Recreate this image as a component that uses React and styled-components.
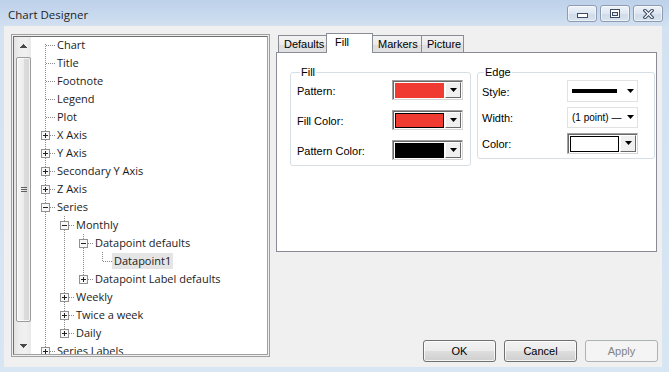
import React from "react";
import styled, { createGlobalStyle } from "styled-components";

const Global = createGlobalStyle`
  html, body { margin: 0; padding: 0; }
  body { width: 669px; height: 372px; overflow: hidden; background: #d6e3f1; }
`;

const Window = styled.div`
  width: 669px;
  height: 372px;
  display: flex;
  flex-direction: column;
  background: linear-gradient(to bottom, #bdd1ea 0px, #c9daee 16px, #d4e1f0 28px, #d8e5f3 100%);
`;

const TitleBar = styled.div`
  height: 26px;
  flex: none;
  display: flex;
  align-items: flex-start;
  padding: 0 6px 0 8px;
  box-sizing: border-box;
`;

const Title = styled.div`
  flex: 1;
  font-family: "Open Sans", sans-serif;
  font-size: 11.5px;
  color: #1e1e1e;
  line-height: 16px;
  padding-top: 7px;
`;

const Controls = styled.div`
  display: flex;
  gap: 3px;
  margin-top: 5px;
`;

const CtlBtn = styled.div`
  width: 30px;
  height: 17px;
  box-sizing: border-box;
  border: 1px solid #8d9cb2;
  border-radius: 3px;
  background: linear-gradient(to bottom, #eef3f9 0%, #dde6f1 50%, #cfdbe9 51%, #d9e3ef 100%);
  box-shadow: inset 0 0 0 1px rgba(255, 255, 255, 0.55);
  display: flex;
  align-items: center;
  justify-content: center;
`;

const Client = styled.div`
  flex: 1;
  margin: 0 7px 5px 4px;
  background: #f0f0f0;
  display: flex;
  gap: 6px;
  padding: 8px 5px 0 7px;
  box-sizing: border-box;
`;

/* ---------- tree ---------- */
const TreeFrame = styled.div`
  width: 259px;
  height: 323px;
  flex: none;
  box-sizing: border-box;
  border: 1px solid #a0a0a0;
  padding: 1px;
  background: #f0f0f0;
`;

const TreeInner = styled.div`
  height: 100%;
  box-sizing: border-box;
  border: 1px solid #6f6f6f;
  border-right-color: #a0a0a0;
  border-bottom-color: #a0a0a0;
  background: #fff;
  display: flex;
  overflow: hidden;
`;

const ScrollBar = styled.div`
  width: 17px;
  flex: none;
  display: flex;
  flex-direction: column;
  background: linear-gradient(to right, #e4e4e4, #eeeeee 35%, #f1f1f1 70%, #e9e9e9);
`;

const ScrollBtn = styled.div`
  height: 17px;
  flex: none;
  display: flex;
  align-items: center;
  justify-content: center;
  padding-left: 2px;
`;

const Track = styled.div`
  flex: 1;
  display: flex;
  flex-direction: column;
  padding: 3px 0 15px 2px;
`;

const Thumb = styled.div`
  flex: 1;
  border: 1px solid #9b9b9b;
  border-radius: 2px;
  background: linear-gradient(to right, #f6f6f6, #ececec 50%, #dcdcdc 51%, #d6d6d6);
  box-shadow: inset 0 0 0 1px rgba(255, 255, 255, 0.7);
  display: flex;
  align-items: center;
  justify-content: center;
`;

const TreeList = styled.div`
  flex: 1;
  padding-left: 5px;
  margin-top: -1px;
  display: flex;
  flex-direction: column;
`;

const TreeRow = styled.div`
  height: 18px;
  flex: none;
  display: flex;
  align-items: flex-start;
`;

const NodeLabel = styled.div`
  height: 16px;
  margin-top: 1px;
  padding: 0 2px;
  line-height: 16px;
  font-family: "Open Sans", sans-serif;
  font-size: 11px;
  color: #1b1b1b;
  white-space: nowrap;
  background: ${(p) => (p.$selected ? "#e5e5e5" : "transparent")};
`;

/* ---------- right side ---------- */
const RightCol = styled.div`
  width: 381px;
  flex: none;
  display: flex;
  flex-direction: column;
  margin-top: -1px;
`;

const TabStrip = styled.div`
  height: 20px;
  display: flex;
  align-items: flex-end;
  padding-left: 2px;
  margin-bottom: -1px;
`;

const Tab = styled.div`
  width: ${(p) => p.$w}px;
  height: ${(p) => (p.$active ? 20 : 18)}px;
  box-sizing: border-box;
  margin-right: -1px;
  border: 1px solid #898c95;
  border-bottom: none;
  background: ${(p) =>
    p.$active ? "#ffffff" : "linear-gradient(to bottom, #f3f3f3, #ebebeb 50%, #dddddd 51%, #e2e2e2)"};
  position: relative;
  z-index: ${(p) => (p.$active ? 2 : 0)};
  font-family: "Liberation Sans", Arial, sans-serif;
  font-size: 11px;
  color: #000;
  white-space: nowrap;
  line-height: 13px;
  padding: 2px 0 0 ${(p) => (p.$active ? 8 : 5)}px;
`;

const Panel = styled.div`
  height: 200px;
  box-sizing: border-box;
  border: 1px solid #898c95;
  background: #fff;
  position: relative;
  z-index: 1;
  display: flex;
  align-items: flex-start;
  gap: 6px;
  padding: 19px 0 0 13px;
`;

const GroupBox = styled.div`
  position: relative;
  box-sizing: border-box;
  width: ${(p) => p.$w}px;
  height: ${(p) => p.$h}px;
  border: 1px solid #d5dfe5;
  border-radius: 3px;
  padding: ${(p) => p.$pad};
  display: grid;
  grid-template-columns: ${(p) => p.$labelW}px 71px;
  grid-auto-rows: ${(p) => p.$rowH}px;
  row-gap: ${(p) => p.$gap}px;
  align-items: center;
  align-content: start;
`;

const GroupTitle = styled.span`
  position: absolute;
  top: -8px;
  left: ${(p) => p.$left}px;
  padding: 0 1px;
  background: #fff;
  font-family: "Liberation Sans", Arial, sans-serif;
  font-size: 11px;
  line-height: 14px;
  color: #000;
`;

const FieldLabel = styled.div`
  font-family: "Liberation Sans", Arial, sans-serif;
  font-size: 11px;
  color: #000;
  white-space: nowrap;
  padding-top: 1px;
`;

const Combo3D = styled.div`
  width: 71px;
  height: ${(p) => p.$h || 20}px;
  box-sizing: border-box;
  display: flex;
  gap: 1px;
  padding: 1px;
  border: 1px solid #a0a0a0;
  border-right-color: #d6d6d6;
  border-bottom-color: #d6d6d6;
  box-shadow: inset 1px 1px 0 #696969;
  background: #fff;
`;

const Swatch = styled.div`
  flex: 1;
  box-sizing: border-box;
  margin: 1px 0 0 1px;
  background: ${(p) => p.$color};
  border: 1px solid ${(p) => p.$edge};
`;

const DropBtn = styled.div`
  width: 16px;
  flex: none;
  box-sizing: border-box;
  background: #f0f0f0;
  border: 1px solid;
  border-color: #ffffff #696969 #696969 #ffffff;
  display: flex;
  align-items: center;
  justify-content: center;
`;

const FlatCombo = styled.div`
  width: 71px;
  height: ${(p) => p.$h}px;
  box-sizing: border-box;
  border: 1px solid #e2e2e2;
  display: flex;
  align-items: center;
  padding: 0 3px 0 4px;
  gap: 4px;
`;

const LineSample = styled.div`
  flex: 1;
  height: 4px;
  background: #000;
  margin-right: 6px;
`;

const ComboText = styled.div`
  flex: 1;
  font-family: "Liberation Sans", Arial, sans-serif;
  font-size: 10px;
  color: #000;
  white-space: nowrap;
  padding-top: 1px;
`;

const ButtonRow = styled.div`
  margin-top: auto;
  display: flex;
  justify-content: flex-end;
  gap: 8px;
  margin-right: -1px;
  margin-bottom: 5px;
`;

const DlgButton = styled.div`
  width: 73px;
  height: 22px;
  box-sizing: border-box;
  border: 1px solid ${(p) => (p.$disabled ? "#adb2b5" : "#707070")};
  border-radius: 3px;
  background: ${(p) =>
    p.$disabled
      ? "#f4f4f4"
      : "linear-gradient(to bottom, #f2f2f2 0%, #ebebeb 50%, #dddddd 51%, #cfcfcf 100%)"};
  box-shadow: inset 0 0 0 1px ${(p) => (p.$disabled ? "transparent" : "rgba(255,255,255,0.75)")};
  display: flex;
  align-items: center;
  justify-content: center;
  font-family: "Liberation Sans", Arial, sans-serif;
  font-size: 11px;
  color: ${(p) => (p.$disabled ? "#838383" : "#000")};
`;

/* ---------- drawings ---------- */
const DOT = "#8a8a8a";

function Arrow({ up }) {
  return (
    <svg width="7" height="4" viewBox="0 0 7 4" shapeRendering="crispEdges">
      <polygon points={up ? "3.5,0 7,4 0,4" : "0,0 7,0 3.5,4"} fill="#4a4a4a" />
    </svg>
  );
}

function SmallTri() {
  return (
    <svg width="7" height="4" viewBox="0 0 7 4">
      <polygon points="0,0 7,0 3.5,4" fill="#000" />
    </svg>
  );
}

function Grip() {
  return (
    <svg width="6" height="6" viewBox="0 0 6 6" shapeRendering="crispEdges">
      <line x1="0" y1="0.5" x2="6" y2="0.5" stroke="#606060" />
      <line x1="0" y1="2.5" x2="6" y2="2.5" stroke="#606060" />
      <line x1="0" y1="4.5" x2="6" y2="4.5" stroke="#606060" />
    </svg>
  );
}

function Guide({ on }) {
  return (
    <svg width="19" height="18" shapeRendering="crispEdges" style={{ flex: "none" }}>
      {on && <line x1="9.5" y1="0" x2="9.5" y2="18" stroke={DOT} strokeDasharray="1 1" />}
    </svg>
  );
}

function Connector({ next, first, exp }) {
  return (
    <svg width="19" height="18" shapeRendering="crispEdges" style={{ flex: "none" }}>
      <line x1="9.5" y1={first ? 8 : 0} x2="9.5" y2={next ? 18 : 10} stroke={DOT} strokeDasharray="1 1" />
      <line x1={exp ? 14 : 10} y1="9.5" x2="19" y2="9.5" stroke={DOT} strokeDasharray="1 1" />
      {exp && (
        <g>
          <rect x="5.5" y="5.5" width="8" height="8" fill="#f8f8f8" stroke="#919191" />
          <line x1="7" y1="9.5" x2="12" y2="9.5" stroke="#222" />
          {exp === "+" && <line x1="9.5" y1="7" x2="9.5" y2="12" stroke="#222" />}
        </g>
      )}
    </svg>
  );
}

function MinIcon() {
  return (
    <svg width="11" height="6" viewBox="0 0 11 6" shapeRendering="crispEdges" style={{ marginTop: 4 }}>
      <rect x="0.5" y="0.5" width="10" height="4" fill="#fff" stroke="#3d4b60" />
    </svg>
  );
}

function MaxIcon() {
  return (
    <svg width="10" height="9" viewBox="0 0 10 9" shapeRendering="crispEdges">
      <rect x="0.5" y="0.5" width="9" height="8" fill="#fff" stroke="#3d4b60" />
      <rect x="2.5" y="3.5" width="5" height="3" fill="#dfe6ef" stroke="#3d4b60" />
    </svg>
  );
}

function CloseIcon() {
  return (
    <svg width="11" height="10" viewBox="0 0 11 10">
      <path d="M2 1.5 L9 8.5 M9 1.5 L2 8.5" stroke="#3d4b60" strokeWidth="3.4" strokeLinecap="square" />
      <path d="M2 1.5 L9 8.5 M9 1.5 L2 8.5" stroke="#ffffff" strokeWidth="1.3" strokeLinecap="square" />
    </svg>
  );
}

/* ---------- data ---------- */
const nodes = [
  { label: "Chart", level: 0, first: true },
  { label: "Title", level: 0 },
  { label: "Footnote", level: 0 },
  { label: "Legend", level: 0 },
  { label: "Plot", level: 0 },
  { label: "X Axis", level: 0, exp: "+" },
  { label: "Y Axis", level: 0, exp: "+" },
  { label: "Secondary Y Axis", level: 0, exp: "+" },
  { label: "Z Axis", level: 0, exp: "+" },
  { label: "Series", level: 0, exp: "-" },
  { label: "Monthly", level: 1, guides: [1], exp: "-" },
  { label: "Datapoint defaults", level: 2, guides: [1, 1], exp: "-" },
  { label: "Datapoint1", level: 3, guides: [1, 1, 1], last: true, selected: true },
  { label: "Datapoint Label defaults", level: 2, guides: [1, 1], exp: "+", last: true },
  { label: "Weekly", level: 1, guides: [1], exp: "+" },
  { label: "Twice a week", level: 1, guides: [1], exp: "+" },
  { label: "Daily", level: 1, guides: [1], exp: "+", last: true },
  { label: "Series Labels", level: 0, exp: "+" },
];

const tabs = [
  { label: "Defaults", w: 49 },
  { label: "Fill", w: 47, active: true },
  { label: "Markers", w: 50 },
  { label: "Picture", w: 43 },
];

const fillRows = [
  { label: "Pattern:", color: "#ef3b31", edge: "#ef3b31" },
  { label: "Fill Color:", color: "#ef3b31", edge: "#000000" },
  { label: "Pattern Color:", color: "#000000", edge: "#000000" },
];

export default function App() {
  return (
    <>
      <Global />
      <Window>
        <TitleBar>
          <Title>Chart Designer</Title>
          <Controls>
            <CtlBtn><MinIcon /></CtlBtn>
            <CtlBtn><MaxIcon /></CtlBtn>
            <CtlBtn><CloseIcon /></CtlBtn>
          </Controls>
        </TitleBar>
        <Client>
          <TreeFrame>
            <TreeInner>
              <ScrollBar>
                <ScrollBtn><Arrow up /></ScrollBtn>
                <Track>
                  <Thumb><Grip /></Thumb>
                </Track>
                <ScrollBtn><Arrow /></ScrollBtn>
              </ScrollBar>
              <TreeList>
                {nodes.map((n) => (
                  <TreeRow key={n.label}>
                    {(n.guides || []).map((g, i) => (
                      <Guide key={i} on={!!g} />
                    ))}
                    <Connector next={!n.last} first={n.first} exp={n.exp} />
                    <NodeLabel $selected={n.selected}>{n.label}</NodeLabel>
                  </TreeRow>
                ))}
              </TreeList>
            </TreeInner>
          </TreeFrame>
          <RightCol>
            <TabStrip>
              {tabs.map((t) => (
                <Tab key={t.label} $w={t.w} $active={t.active}>{t.label}</Tab>
              ))}
            </TabStrip>
            <Panel>
              <GroupBox $w={181} $h={94} $pad="7px 7px 0 6px" $labelW={95} $rowH={20} $gap={10}>
                <GroupTitle $left={9}>Fill</GroupTitle>
                {fillRows.map((r) => (
                  <React.Fragment key={r.label}>
                    <FieldLabel>{r.label}</FieldLabel>
                    <Combo3D>
                      <Swatch $color={r.color} $edge={r.edge} />
                      <DropBtn><SmallTri /></DropBtn>
                    </Combo3D>
                  </React.Fragment>
                ))}
              </GroupBox>
              <GroupBox $w={178} $h={87} $pad="7px 15px 0 4px" $labelW={85} $rowH={22} $gap={4}>
                <GroupTitle $left={6}>Edge</GroupTitle>
                <FieldLabel>Style:</FieldLabel>
                <FlatCombo $h={22}>
                  <LineSample />
                  <SmallTri />
                </FlatCombo>
                <FieldLabel>Width:</FieldLabel>
                <FlatCombo $h={21}>
                  <ComboText>(1 point) —</ComboText>
                  <SmallTri />
                </FlatCombo>
                <FieldLabel>Color:</FieldLabel>
                <Combo3D $h={21}>
                  <Swatch $color="#ffffff" $edge="#000000" />
                  <DropBtn><SmallTri /></DropBtn>
                </Combo3D>
              </GroupBox>
            </Panel>
            <ButtonRow>
              <DlgButton>OK</DlgButton>
              <DlgButton>Cancel</DlgButton>
              <DlgButton $disabled>Apply</DlgButton>
            </ButtonRow>
          </RightCol>
        </Client>
      </Window>
    </>
  );
}
